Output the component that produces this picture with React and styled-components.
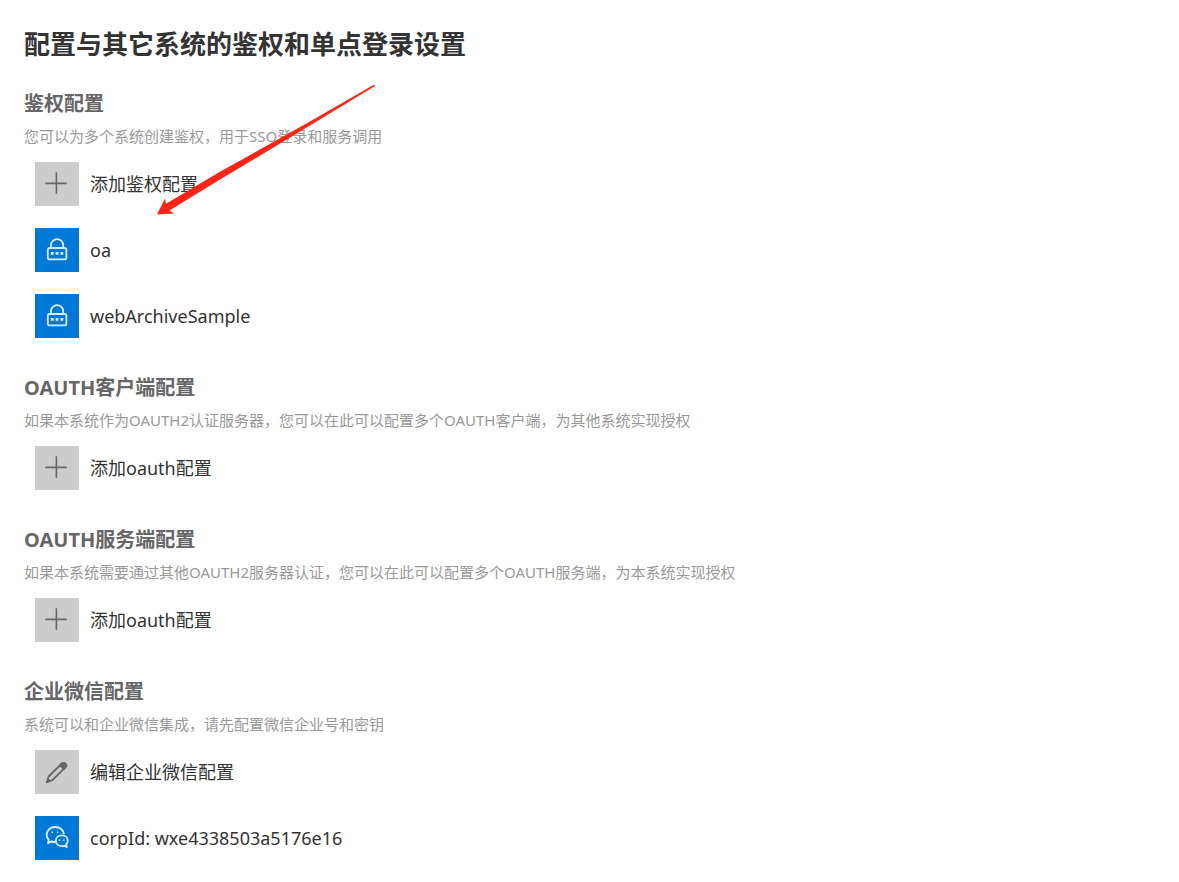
import React from "react";
import styled, { createGlobalStyle } from "styled-components";

const GlobalStyle = createGlobalStyle`
  * { box-sizing: border-box; }
  body {
    margin: 0;
    background: #fff;
    color: #333;
    font-family: "Noto Sans", "Noto Sans CJK SC", sans-serif;
  }
`;

const Page = styled.main`
  position: relative;
  padding: 26px 24px 22px;
`;

const Title = styled.h1`
  margin: 0;
  font-size: 26px;
  line-height: 36px;
  font-weight: 700;
`;

const Section = styled.section`
  margin-top: ${(p) => (p.$first ? 28 : 36)}px;
`;

const Heading = styled.h2`
  margin: 0;
  font-size: 20px;
  line-height: 28px;
  font-weight: 700;
  color: #666;
`;

const Description = styled.p`
  margin: 8px 0 16px;
  font-size: 15px;
  line-height: 20px;
  color: #999;
`;

const List = styled.ul`
  display: flex;
  flex-direction: column;
  gap: 22px;
  margin: 0;
  padding: 0 0 0 11px;
  list-style: none;
`;

const Item = styled.button`
  display: flex;
  align-items: center;
  gap: 11px;
  padding: 0;
  border: 0;
  background: none;
  color: #333;
  font-family: inherit;
  font-size: 18px;
  line-height: 24px;
  text-align: left;
  cursor: pointer;
`;

const Tile = styled.span`
  display: block;
  width: 44px;
  height: 44px;
  background: ${(p) => (p.$active ? "#0078d7" : "#ccc")};
  color: ${(p) => (p.$active ? "#d9ebf9" : "#666")};
`;

const Glyph = styled.svg`
  display: block;
  fill: none;
  stroke: currentColor;
`;

const Arrow = styled.svg`
  position: absolute;
  top: 84px;
  left: 156px;
  pointer-events: none;
`;

const glyphs = {
  plus: <path d="M10.3 21.4H31.7M21.4 10.3V31.7" strokeWidth="1.6" />,
  lock: (
    <>
      <rect x="12.8" y="20" width="18.6" height="11.4" rx="2" strokeWidth="1.8" />
      <path d="M16 20V17.2a6.1 6.1 0 0 1 12.2 0V20" strokeWidth="1.8" />
      <path d="M15.8 25.4h2.9M20.6 25.4h2.9M25.4 25.4h2.9" strokeWidth="2.9" />
    </>
  ),
  pencil: (
    <>
      <path
        d="M11.8 32.2L13.7 26.5L26.8 13.5Q28.3 12.2 30.2 13.5Q32.2 15.4 30.6 17.2L17.4 30.2Z"
        strokeWidth="1.8"
        strokeLinejoin="round"
      />
      <path d="M25 15.4L26.8 13.5Q28.3 12.2 30.2 13.5Q32.2 15.4 30.6 17.2L28.8 19Z" fill="currentColor" strokeWidth="1.8" />
      <path d="M11.5 32.5L13 28.6L15.4 31Z" fill="currentColor" strokeWidth="1" />
    </>
  ),
  wechat: (
    <>
      <path
        d="M20.2 26Q18 26.2 16.2 25.5L13 27.1L13.8 24Q11.6 21.8 11.6 18.8C11.6 14.2 15.4 11 20.2 11C24.8 11 28.3 13.8 28.8 17.6"
        strokeWidth="1.9"
        strokeLinejoin="round"
        strokeLinecap="round"
      />
      <path
        d="M26.8 19.4C30.2 19.4 32.8 21.7 32.8 24.7Q32.8 26.9 31.1 28.4L31.8 31L29.2 29.8Q28.1 30.1 26.8 30.1C23.4 30.1 20.8 27.8 20.8 24.7C20.8 21.7 23.4 19.4 26.8 19.4Z"
        strokeWidth="1.9"
        strokeLinejoin="round"
      />
      <path d="M16.5 16.3h1.5M21.8 16.3h1.5M23.8 24.2h1.5M28 24.2h1.5" strokeWidth="1.5" />
    </>
  ),
};

const sections = [
  {
    title: "鉴权配置",
    text: "您可以为多个系统创建鉴权，用于SSO登录和服务调用",
    items: [
      { icon: "plus", label: "添加鉴权配置" },
      { icon: "lock", label: "oa", active: true },
      { icon: "lock", label: "webArchiveSample", active: true },
    ],
  },
  {
    title: "OAUTH客户端配置",
    text: "如果本系统作为OAUTH2认证服务器，您可以在此可以配置多个OAUTH客户端，为其他系统实现授权",
    items: [{ icon: "plus", label: "添加oauth配置" }],
  },
  {
    title: "OAUTH服务端配置",
    text: "如果本系统需要通过其他OAUTH2服务器认证，您可以在此可以配置多个OAUTH服务端，为本系统实现授权",
    items: [{ icon: "plus", label: "添加oauth配置" }],
  },
  {
    title: "企业微信配置",
    text: "系统可以和企业微信集成，请先配置微信企业号和密钥",
    items: [
      { icon: "pencil", label: "编辑企业微信配置" },
      { icon: "wechat", label: "corpId: wxe4338503a5176e16", active: true },
    ],
  },
];

export default function App() {
  return (
    <Page lang="zh-CN">
      <GlobalStyle />
      <Title>配置与其它系统的鉴权和单点登录设置</Title>
      {sections.map((section, index) => (
        <Section key={section.title} $first={index === 0}>
          <Heading>{section.title}</Heading>
          <Description>{section.text}</Description>
          <List>
            {section.items.map((item) => (
              <li key={item.label}>
                <Item type="button">
                  <Tile $active={item.active}>
                    <Glyph width="44" height="44" viewBox="0 0 44 44" aria-hidden="true">
                      {glyphs[item.icon]}
                    </Glyph>
                  </Tile>
                  {item.label}
                </Item>
              </li>
            ))}
          </List>
        </Section>
      ))}
      <Arrow width="220" height="132" viewBox="0 0 220 132" aria-hidden="true">
        <path
          d="M1 130.6L9 114.6L10 119.8L64 87.8L154 37.4L218.3 .6L219 2L154 41.6L64 95.6L13.4 126.4L18 129.6Z"
          fill="#ff2416"
        />
      </Arrow>
    </Page>
  );
}
